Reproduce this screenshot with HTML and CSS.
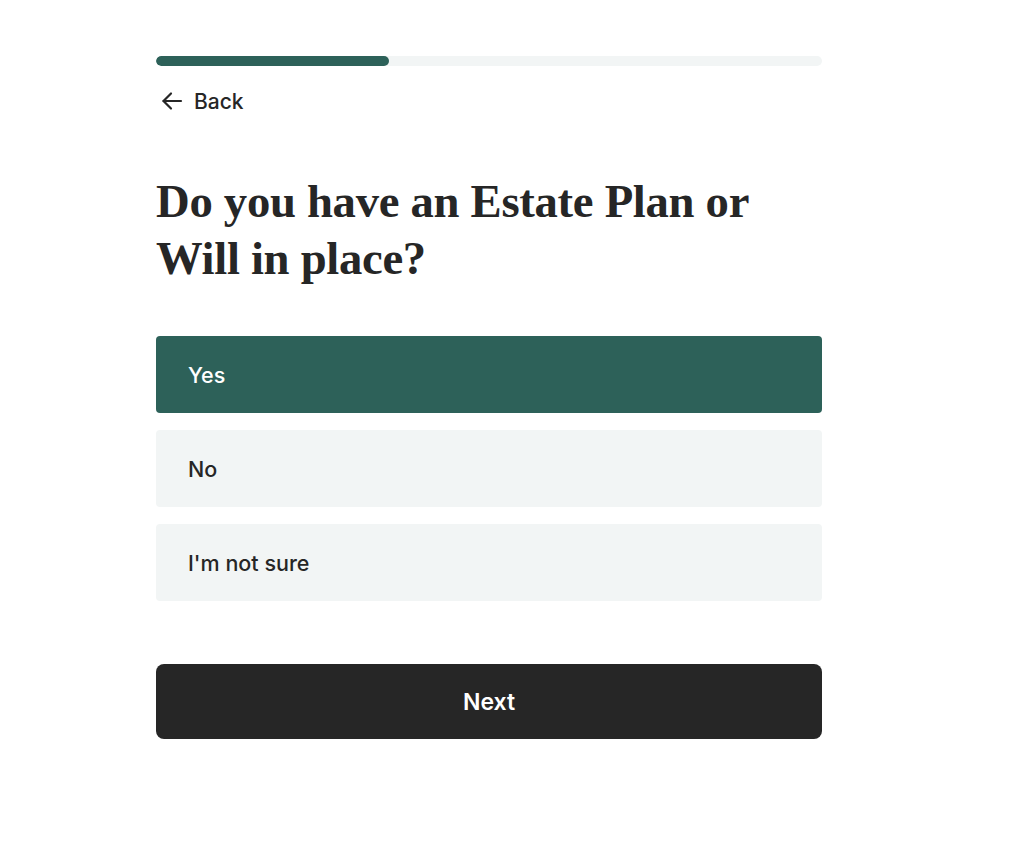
FILE: index.html
```html
<!DOCTYPE html>
<html lang="en">
<head>
<meta charset="utf-8">
<title>Estate Plan</title>
<link rel="stylesheet" href="styles.css">
</head>
<body>
<main class="wrap">
  <div class="progress"><div class="progress-fill" style="width:35%"></div></div>
  <button class="back" type="button">
    <svg width="24" height="24" viewBox="0 0 24 24" fill="none" stroke="#262626" stroke-width="2.2" stroke-linecap="round" stroke-linejoin="round"><path d="M21 12H3.5"/><path d="M11 4.5L3.5 12L11 19.5"/></svg>
    <span>Back</span>
  </button>
  <h1 class="title">Do you have an Estate Plan or Will in place?</h1>
  <div class="options">
    <button class="option selected" type="button">Yes</button>
    <button class="option" type="button">No</button>
    <button class="option" type="button">I'm not sure</button>
  </div>
  <button class="next" type="button">Next</button>
</main>
</body>
</html>
```
FILE: styles.css
```css
* { box-sizing: border-box; }
html, body { margin: 0; background: #fff; }
body { font-family: "Inter", "Liberation Sans", sans-serif; color: #262626; }
.wrap { width: 666px; margin-left: 156px; padding-top: 56px; display: flex; flex-direction: column; }
.progress { height: 10px; background: #f2f5f5; border-radius: 5px; overflow: hidden; }
.progress-fill { height: 100%; background: #2d6159; border-radius: 5px; }
.back { margin-top: 23px; display: flex; align-items: center; gap: 10px; background: none; border: 0; padding: 0 0 0 4px; font-family: inherit; font-size: 21px; font-weight: 500; color: #262626; cursor: pointer; align-self: flex-start; height: 24px; }
.title { font-family: "Liberation Serif", "DejaVu Serif", serif; font-weight: 700; font-size: 46.7px; line-height: 57px; margin: 60px 0 0; letter-spacing: -0.3px; width: 640px; }
.options { margin-top: 49px; display: flex; flex-direction: column; gap: 17px; }
.option { height: 77px; border: 0; border-radius: 4px; background: #f2f5f5; text-align: left; padding: 0 32px; font-family: inherit; font-size: 21.5px; font-weight: 500; color: #262626; }
.option.selected { background: #2d6159; color: #fff; }
.next { margin-top: 63px; height: 75px; border: 0; border-radius: 8px; background: #262626; color: #fff; font-family: inherit; font-size: 23px; font-weight: 600; }
```
